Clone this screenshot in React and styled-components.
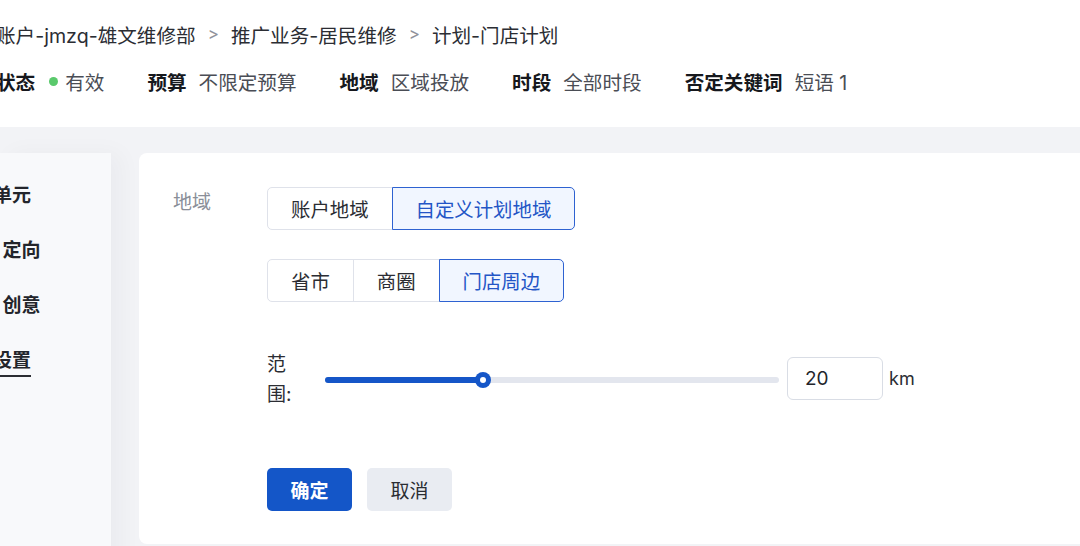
import React from "react";
import styled, { createGlobalStyle } from "styled-components";

const GlobalStyle = createGlobalStyle`
  html, body {
    margin: 0;
    padding: 0;
  }
  body {
    width: 1080px;
    height: 546px;
    overflow: hidden;
    background: #f2f3f6;
    font-family: Inter, "Noto Sans CJK SC", sans-serif;
    color: #333;
  }
`;

const Header = styled.header`
  background: #fff;
  height: 127px;
  box-sizing: border-box;
  padding-top: 20px;
`;

const HeaderInner = styled.div`
  margin-left: -4px;
`;

const Breadcrumb = styled.div`
  display: flex;
  align-items: center;
  height: 28px;
  font-size: 19.6px;
  color: #2b2d33;
  white-space: nowrap;
`;

const Sep = styled.span`
  margin: 0 12px;
  color: #8f939b;
  font-size: 17px;
`;

const Stats = styled.div`
  display: flex;
  align-items: center;
  gap: 43px;
  height: 28px;
  margin-top: 19px;
  font-size: 19.6px;
  white-space: nowrap;
`;

const Stat = styled.div`
  display: flex;
  align-items: center;
  gap: 12px;
`;

const StatLabel = styled.span`
  font-weight: 700;
  color: #16181d;
`;

const StatValue = styled.span`
  display: flex;
  align-items: center;
  color: #4a4d55;
`;

const Dot = styled.i`
  width: 9px;
  height: 9px;
  border-radius: 50%;
  background: #5ac96c;
  margin: 0 7px 0 2px;
`;

const Body = styled.div`
  display: flex;
  padding-top: 26px;
  height: 419px;
  gap: 28px;
`;

const Sidebar = styled.nav`
  width: 111px;
  flex: none;
  background: #f8f9fb;
  box-shadow: 10px 0 22px rgba(30, 40, 70, 0.035);
  display: flex;
  flex-direction: column;
  align-items: flex-start;
  gap: 27px;
  padding-top: 29px;
  box-sizing: border-box;
  overflow: hidden;
`;

const NavItem = styled.span`
  display: inline-block;
  margin-left: -45px;
  line-height: 28px;
  font-size: 19px;
  font-weight: 600;
  color: #23252b;
  white-space: pre;
  border-bottom: 2px solid ${({ $active }) => ($active ? "#2b2d33" : "transparent")};
  margin-bottom: -2px;
`;

const Card = styled.main`
  flex: 1;
  margin-right: -20px;
  height: 391px;
  background: #fff;
  border-radius: 8px;
  padding: 34px 0 0 34px;
  box-sizing: border-box;
`;

const FieldRow = styled.div`
  display: flex;
  align-items: flex-start;
`;

const FieldLabel = styled.div`
  width: 94px;
  line-height: 32px;
  font-size: 19px;
  color: #8a8e98;
`;

const FieldBody = styled.div`
  display: flex;
  flex-direction: column;
  align-items: flex-start;
`;

const Segments = styled.div`
  display: flex;
  margin-top: ${({ $gap }) => $gap || 0}px;
`;

const Segment = styled.button`
  height: 43px;
  padding: 0 23px;
  font-family: inherit;
  font-size: 19.4px;
  background: ${({ $on }) => ($on ? "#f1f6ff" : "#fff")};
  color: ${({ $on }) => ($on ? "#2355c6" : "#2b2d33")};
  border: 1px solid ${({ $on }) => ($on ? "#2e62d1" : "#dfe2ea")};
  margin-left: -1px;
  position: relative;
  z-index: ${({ $on }) => ($on ? 1 : 0)};
  &:first-child {
    margin-left: 0;
    border-radius: 5px 0 0 5px;
  }
  &:last-child {
    border-radius: 0 5px 5px 0;
  }
`;

const RangeRow = styled.div`
  display: flex;
  align-items: center;
  margin-top: 48px;
`;

const RangeLabel = styled.div`
  width: 36px;
  line-height: 30px;
  font-size: 19px;
  color: #2b2d33;
`;

const Track = styled.div`
  position: relative;
  width: 454px;
  height: 6px;
  margin-left: 22px;
  border-radius: 3px;
  background: #e3e6ee;
`;

const Fill = styled.div`
  height: 100%;
  border-radius: 3px;
  background: #1556c8;
`;

const Thumb = styled.div`
  position: absolute;
  top: 50%;
  width: 16px;
  height: 16px;
  margin: -8px 0 0 -8px;
  border-radius: 50%;
  background: #1556c8;
  display: flex;
  align-items: center;
  justify-content: center;
  &::after {
    content: "";
    width: 6px;
    height: 6px;
    border-radius: 50%;
    background: #fff;
  }
`;

const NumberBox = styled.div`
  width: 96px;
  height: 43px;
  margin: 0 0 4px 8px;
  box-sizing: border-box;
  border: 1px solid #d9dde5;
  border-radius: 6px;
  padding-left: 17px;
  display: flex;
  align-items: center;
  font-size: 19px;
  color: #23252b;
`;

const Unit = styled.span`
  margin-left: 6px;
  margin-bottom: 3px;
  font-size: 18px;
  color: #2b2d33;
`;

const Actions = styled.div`
  display: flex;
  gap: 15px;
  margin-top: 58px;
`;

const Button = styled.button`
  width: 85px;
  height: 43px;
  border: none;
  border-radius: 5px;
  font-family: inherit;
  font-size: 19px;
  font-weight: ${({ $primary }) => ($primary ? 600 : 400)};
  background: ${({ $primary }) => ($primary ? "#1456c8" : "#e9ecf2")};
  color: ${({ $primary }) => ($primary ? "#fff" : "#2b2d33")};
`;

const stats = [
  { label: "预算", value: "不限定预算" },
  { label: "地域", value: "区域投放" },
  { label: "时段", value: "全部时段" },
  { label: "否定关键词", value: "短语 1" },
];

const navItems = ["推广单元", "人群  定向", "广告  创意", "高级设置"];

export default function App() {
  const value = 20;
  const max = 57.5;
  const pct = (value / max) * 100;

  return (
    <>
      <GlobalStyle />
      <Header>
        <HeaderInner>
          <Breadcrumb>
            <span>账户-jmzq-雄文维修部</span>
            <Sep>&gt;</Sep>
            <span>推广业务-居民维修</span>
            <Sep>&gt;</Sep>
            <span>计划-门店计划</span>
          </Breadcrumb>
          <Stats>
            <Stat>
              <StatLabel>状态</StatLabel>
              <StatValue>
                <Dot />
                有效
              </StatValue>
            </Stat>
            {stats.map((s) => (
              <Stat key={s.label}>
                <StatLabel>{s.label}</StatLabel>
                <StatValue>{s.value}</StatValue>
              </Stat>
            ))}
          </Stats>
        </HeaderInner>
      </Header>

      <Body>
        <Sidebar>
          {navItems.map((t, i) => (
            <NavItem key={t} $active={i === navItems.length - 1}>
              {t}
            </NavItem>
          ))}
        </Sidebar>

        <Card>
          <FieldRow>
            <FieldLabel>地域</FieldLabel>
            <FieldBody>
              <Segments>
                <Segment>账户地域</Segment>
                <Segment $on>自定义计划地域</Segment>
              </Segments>
              <Segments $gap={29}>
                <Segment>省市</Segment>
                <Segment>商圈</Segment>
                <Segment $on>门店周边</Segment>
              </Segments>

              <RangeRow>
                <RangeLabel>范围:</RangeLabel>
                <Track>
                  <Fill style={{ width: `${pct}%` }} />
                  <Thumb style={{ left: `${pct}%` }} />
                </Track>
                <NumberBox>{value}</NumberBox>
                <Unit>km</Unit>
              </RangeRow>

              <Actions>
                <Button $primary>确定</Button>
                <Button>取消</Button>
              </Actions>
            </FieldBody>
          </FieldRow>
        </Card>
      </Body>
    </>
  );
}
